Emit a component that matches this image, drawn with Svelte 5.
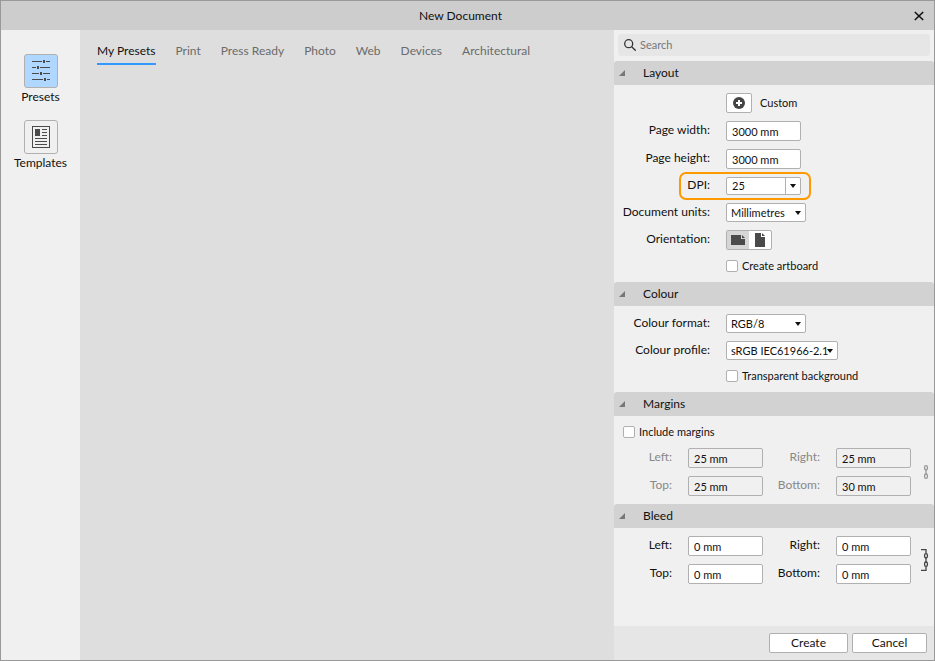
<script>
    const tabs = ['My Presets', 'Print', 'Press Ready', 'Photo', 'Web', 'Devices', 'Architectural'];

    let activeTab = $state('My Presets');
    let mode = $state('presets');
    let orientation = $state('landscape');
    let search = $state('');

    let open = $state({ layout: true, colour: true, margins: true, bleed: true });

    let page = $state({ width: '3000 mm', height: '3000 mm', dpi: '25', units: 'Millimetres', artboard: false });
    let colour = $state({ format: 'RGB/8', profile: 'sRGB IEC61966-2.1', transparent: false });
    let includeMargins = $state(false);
    let margins = $state({ Left: '25 mm', Right: '25 mm', Top: '25 mm', Bottom: '30 mm' });
    let bleed = $state({ Left: '0 mm', Right: '0 mm', Top: '0 mm', Bottom: '0 mm' });
</script>

{#snippet sectionHead(key, title)}
    <h2>
        <button class="section-head" aria-expanded={open[key]} onclick={() => (open[key] = !open[key])}>
            <span class="corner" class:closed={!open[key]}></span>
            {title}
        </button>
    </h2>
{/snippet}

{#snippet chain()}
    <rect x="3.6" y="4.6" width="2.8" height="4.4" rx="1.4"></rect>
    <rect x="3.6" y="13" width="2.8" height="4.4" rx="1.4"></rect>
    <path d="M5 8v6"></path>
{/snippet}

<div class="window">
    <header class="titlebar">
        <h1>New Document</h1>
        <button class="close" aria-label="Close">
            <svg width="10" height="10" viewBox="0 0 10 10"><path d="M.8 1l8.4 8M9.2 1L.8 9"></path></svg>
        </button>
    </header>

    <div class="content">
        <nav class="sidebar">
            <button class="mode" class:active={mode === 'presets'} onclick={() => (mode = 'presets')}>
                <span class="mode-icon">
                    <svg width="18" height="22" viewBox="0 0 18 22" fill="#4a4a4a">
                        <path d="M0 1h10v1H0zM14 1h4v1h-4zM11 0h2v3h-2z"></path>
                        <path d="M0 7h4v1H0zM8 7h10v1H8zM5 6h2v3H5z"></path>
                        <path d="M0 13h7v1H0zM11 13h7v1h-7zM8 12h2v3H8z"></path>
                        <path d="M0 19h11v1H0zM15 19h3v1h-3zM12 18h2v3h-2z"></path>
                    </svg>
                </span>
                Presets
            </button>
            <button class="mode" class:active={mode === 'templates'} onclick={() => (mode = 'templates')}>
                <span class="mode-icon">
                    <svg width="18" height="22" viewBox="0 0 18 22" fill="#4a4a4a">
                        <path d="M0 0h18v22H0zM1 1v20h16V1z" fill-rule="evenodd"></path>
                        <path d="M3 3h5v7H3zM10 3h5v1h-5zM10 6h5v1h-5zM10 9h5v1h-5z"></path>
                        <path d="M3 12h12v1H3zM3 15h12v1H3zM3 18h12v1H3z"></path>
                    </svg>
                </span>
                Templates
            </button>
        </nav>

        <main>
            <div class="tabs" role="tablist">
                {#each tabs as tab}
                    <button role="tab" class="tab" aria-selected={tab === activeTab} onclick={() => (activeTab = tab)}>{tab}</button>
                {/each}
            </div>
        </main>

        <aside class="panel">
            <div class="search">
                <svg width="12" height="12" viewBox="0 0 12 12"><circle cx="4.7" cy="4.7" r="4"></circle><path d="M7.7 7.7l4 4"></path></svg>
                <input type="text" placeholder="Search" aria-label="Search" bind:value={search} />
            </div>

            <section>
                {@render sectionHead('layout', 'Layout')}
                {#if open.layout}
                    <div class="rows">
                        <div class="row">
                            <span class="label"></span>
                            <button class="add" aria-label="Add preset">
                                <svg width="12" height="12" viewBox="0 0 12 12"><circle cx="6" cy="6" r="6" fill="#444"></circle><path d="M6 3v6M3 6h6" stroke="#fff" stroke-width="2"></path></svg>
                            </button>
                            <span class="preset-name">Custom</span>
                        </div>
                        <div class="row">
                            <label class="label" for="page-width">Page width:</label>
                            <input class="field" id="page-width" type="text" bind:value={page.width} />
                        </div>
                        <div class="row">
                            <label class="label" for="page-height">Page height:</label>
                            <input class="field" id="page-height" type="text" bind:value={page.height} />
                        </div>
                        <div class="row highlight">
                            <label class="label" for="dpi">DPI:</label>
                            <div class="combo">
                                <input id="dpi" type="text" bind:value={page.dpi} />
                                <button aria-label="Choose DPI"><span class="arrow"></span></button>
                            </div>
                        </div>
                        <div class="row">
                            <label class="label" for="units">Document units:</label>
                            <div class="select">
                                <select id="units" bind:value={page.units}>
                                    <option>Millimetres</option>
                                    <option>Pixels</option>
                                    <option>Inches</option>
                                </select>
                                <span class="arrow"></span>
                            </div>
                        </div>
                        <div class="row">
                            <span class="label">Orientation:</span>
                            <div class="orientation">
                                <button aria-label="Landscape" aria-pressed={orientation === 'landscape'} onclick={() => (orientation = 'landscape')}>
                                    <svg width="14" height="10" viewBox="0 0 14 10" fill="#4a4a4a"><path d="M0 0h10v4h4v6H0z"></path><path d="M11 0l3 3h-3z"></path></svg>
                                </button>
                                <button aria-label="Portrait" aria-pressed={orientation === 'portrait'} onclick={() => (orientation = 'portrait')}>
                                    <svg width="10" height="14" viewBox="0 0 10 14" fill="#4a4a4a"><path d="M0 0h6v4h4v10H0z"></path><path d="M7 0l3 3H7z"></path></svg>
                                </button>
                            </div>
                        </div>
                        <div class="row">
                            <span class="label"></span>
                            <label class="check"><input type="checkbox" bind:checked={page.artboard} />Create artboard</label>
                        </div>
                    </div>
                {/if}
            </section>

            <section>
                {@render sectionHead('colour', 'Colour')}
                {#if open.colour}
                    <div class="rows">
                        <div class="row">
                            <label class="label" for="format">Colour format:</label>
                            <div class="select">
                                <select id="format" bind:value={colour.format}>
                                    <option>RGB/8</option>
                                    <option>RGB/16</option>
                                    <option>CMYK/8</option>
                                </select>
                                <span class="arrow"></span>
                            </div>
                        </div>
                        <div class="row">
                            <label class="label" for="profile">Colour profile:</label>
                            <div class="select wide">
                                <select id="profile" bind:value={colour.profile}>
                                    <option>sRGB IEC61966-2.1</option>
                                </select>
                                <span class="arrow"></span>
                            </div>
                        </div>
                        <div class="row">
                            <span class="label"></span>
                            <label class="check"><input type="checkbox" bind:checked={colour.transparent} />Transparent background</label>
                        </div>
                    </div>
                {/if}
            </section>

            <section>
                {@render sectionHead('margins', 'Margins')}
                {#if open.margins}
                    <div class="rows">
                        <label class="check include"><input type="checkbox" bind:checked={includeMargins} />Include margins</label>
                        <div class="edges" class:disabled={!includeMargins}>
                            {#each Object.keys(margins) as side}
                                <label class="label" for="margin-{side}">{side}:</label>
                                <input class="field" id="margin-{side}" type="text" disabled={!includeMargins} bind:value={margins[side]} />
                            {/each}
                            <button class="link" aria-label="Link margins" disabled={!includeMargins}>
                                <svg width="9" height="22" viewBox="0 0 9 22">{@render chain()}</svg>
                            </button>
                        </div>
                    </div>
                {/if}
            </section>

            <section>
                {@render sectionHead('bleed', 'Bleed')}
                {#if open.bleed}
                    <div class="rows">
                        <div class="edges">
                            {#each Object.keys(bleed) as side}
                                <label class="label" for="bleed-{side}">{side}:</label>
                                <input class="field" id="bleed-{side}" type="text" bind:value={bleed[side]} />
                            {/each}
                            <button class="link" aria-label="Link bleed">
                                <svg width="9" height="22" viewBox="0 0 9 22">{@render chain()}<path d="M0 .6h5v4M5 17.4v4H0"></path></svg>
                            </button>
                        </div>
                    </div>
                {/if}
            </section>

            <footer>
                <button class="create">Create</button>
                <button class="cancel">Cancel</button>
            </footer>
        </aside>
    </div>
</div>

<style>
    :global(body) {
        margin: 0;
    }

    .window {
        box-sizing: border-box;
        min-height: 100vh;
        display: flex;
        flex-direction: column;
        border: 1px solid #999;
        background: #dedede;
        color: #111;
        font: 12px/18px 'Segoe UI', Lato, sans-serif;
    }

    .window *,
    .window *::before {
        box-sizing: border-box;
    }

    button,
    input,
    select {
        margin: 0;
        padding: 0;
        border: 0;
        background: none;
        color: inherit;
        font: inherit;
    }

    svg {
        display: block;
        flex: none;
    }

    h1,
    h2 {
        margin: 0;
        font: inherit;
    }

    .titlebar {
        display: flex;
        align-items: center;
        height: 29px;
        padding: 0 8px;
        background: #cdcdcd;
    }

    .titlebar h1 {
        flex: 1;
        text-align: center;
    }

    .close {
        display: flex;
        justify-content: center;
        width: 14px;
    }

    .close svg {
        stroke: #111;
        stroke-width: 1.6;
    }

    .content {
        flex: 1;
        display: flex;
    }

    .sidebar {
        display: flex;
        flex-direction: column;
        gap: 14px;
        width: 79px;
        padding-top: 24px;
        background: #f0f0f0;
    }

    .mode {
        display: flex;
        flex-direction: column;
        align-items: center;
    }

    .mode-icon {
        display: flex;
        align-items: center;
        justify-content: center;
        width: 34px;
        height: 34px;
        border: 1px solid #b0b0b0;
        border-radius: 3px;
    }

    .mode.active .mode-icon {
        background: #b0d7ff;
    }

    main {
        flex: 1;
        padding: 12px 17px;
    }

    .tabs {
        display: flex;
        gap: 20px;
    }

    .tab {
        padding-bottom: 3px;
        border-bottom: 2px solid transparent;
        color: #6b6b6b;
        white-space: nowrap;
    }

    .tab[aria-selected='true'] {
        border-color: #3399ff;
        color: #111;
    }

    .panel {
        display: flex;
        flex-direction: column;
        width: 320px;
        background: #f0f0f0;
    }

    .search {
        display: flex;
        align-items: center;
        gap: 4px;
        height: 22px;
        margin: 4px 4px 5px;
        padding: 0 6px;
        border-radius: 3px;
        background: #e6e6e6;
    }

    .search svg {
        fill: none;
        stroke: #333;
        stroke-width: 1.3;
    }

    .search input {
        flex: 1;
        outline: none;
        font-size: 11px;
    }

    .search input::placeholder {
        color: #777;
    }

    .section-head {
        display: flex;
        align-items: center;
        gap: 18px;
        width: 100%;
        height: 24px;
        padding-left: 5px;
        border-radius: 3px 3px 0 0;
        background: #d2d2d2;
    }

    .corner {
        width: 6px;
        height: 6px;
        background: #777;
        clip-path: polygon(100% 0, 100% 100%, 0 100%);
    }

    .corner.closed {
        clip-path: polygon(0 0, 100% 50%, 0 100%);
    }

    .rows {
        display: flex;
        flex-direction: column;
        gap: 8px;
        padding: 8px 0;
    }

    .row {
        position: relative;
        display: flex;
        align-items: center;
    }

    .label {
        height: 18px;
        line-height: 16px;
        text-align: right;
        white-space: nowrap;
    }

    .row .label {
        width: 96px;
        margin-right: 16px;
    }

    .row .label:empty {
        height: 16px;
    }

    .field {
        width: 75px;
        height: 20px;
        padding: 0 5px;
        border: 1px solid #b0b0b0;
        border-radius: 2px;
        background: #fff;
        font-size: 11px;
    }

    .field:disabled {
        background: #f0f0f0;
        color: #111;
    }

    .add {
        display: flex;
        align-items: center;
        justify-content: center;
        width: 26px;
        height: 20px;
        border: 1px solid #b0b0b0;
        border-radius: 2px;
        background: #fff;
    }

    .preset-name {
        margin-left: 8px;
        font-size: 11px;
    }

    .highlight::before {
        content: '';
        position: absolute;
        left: 65px;
        top: -5px;
        width: 132px;
        height: 28px;
        border: 2px solid #ff9900;
        border-radius: 7px;
        pointer-events: none;
    }

    .combo {
        display: flex;
        width: 75px;
        height: 18px;
        border: 1px solid #b0b0b0;
        border-radius: 2px;
        background: #fff;
    }

    .combo input {
        flex: 1;
        min-width: 0;
        padding: 0 5px;
        font-size: 11px;
    }

    .combo button {
        display: flex;
        align-items: center;
        justify-content: center;
        width: 15px;
        border-left: 1px solid #b0b0b0;
    }

    .arrow {
        border: 3px solid transparent;
        border-top: 4px solid #111;
        border-bottom: 0;
    }

    .select {
        position: relative;
        width: 80px;
    }

    .select.wide {
        width: 112px;
    }

    .select select {
        display: block;
        appearance: none;
        width: 100%;
        height: 19px;
        padding: 0 4px;
        border: 1px solid #b0b0b0;
        border-radius: 2px;
        background: #fff;
        font-size: 11px;
    }

    .select .arrow {
        position: absolute;
        right: 5px;
        top: 8px;
        pointer-events: none;
    }

    .orientation {
        display: flex;
        width: 46px;
        height: 20px;
        border: 1px solid #b0b0b0;
        border-radius: 2px;
        background: #fff;
    }

    .orientation button {
        flex: 1;
        display: flex;
        align-items: center;
        justify-content: center;
    }

    .orientation button[aria-pressed='true'] {
        background: #d6d6d6;
    }

    .check {
        display: flex;
        align-items: center;
        gap: 4px;
        height: 16px;
        font-size: 11px;
    }

    .check.include {
        padding-left: 9px;
    }

    .check input {
        appearance: none;
        width: 12px;
        height: 12px;
        border: 1px solid #b0b0b0;
        border-radius: 2px;
        background: #fff;
    }

    .check input:checked {
        background: #3399ff;
    }

    .edges {
        display: grid;
        grid-template-columns: 58px 75px 41px 75px 9px;
        gap: 8px 16px;
        align-items: center;
    }

    .edges .label:nth-of-type(even) {
        margin-left: -16px;
    }

    .edges.disabled .label {
        color: #888;
    }

    .link {
        grid-column: 5;
        grid-row: 1 / 3;
        margin-left: -6px;
    }

    .link svg {
        fill: none;
        stroke: #444;
        stroke-width: 1.3;
    }

    .link:disabled svg {
        stroke: #999;
    }

    footer {
        display: flex;
        justify-content: flex-end;
        gap: 4px;
        margin-top: auto;
        padding: 7px;
        background: #e6e6e6;
    }

    footer button {
        width: 75px;
        height: 20px;
        border: 1px solid #b0b0b0;
        border-radius: 2px;
        background: #fff;
    }

    footer .create {
        width: 79px;
    }
</style>
